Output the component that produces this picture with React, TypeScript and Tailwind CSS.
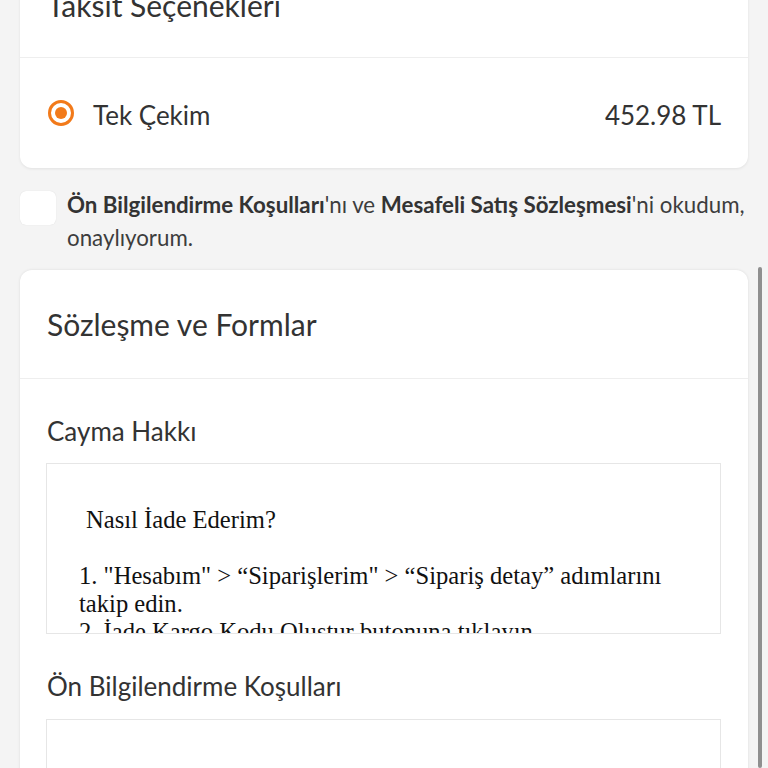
import React from "react";

export default function App() {
  return (
    <div className="relative h-[768px] overflow-hidden bg-[#f4f4f4] text-[#333333]" style={{ fontFamily: "Lato, 'Open Sans', sans-serif" }}>
      {/* Card 1 */}
      <div className="mx-[20px] -mt-[46px] rounded-b-[12px] bg-white shadow-[0_1px_3px_rgba(0,0,0,0.08)]">
        <div className="flex h-[104px] items-center border-b border-[#eeeeee] px-[27px]">
          <span className="text-[30px]">Taksit Seçenekleri</span>
        </div>
        <div className="flex h-[110px] items-center justify-between pl-[28px] pr-[27px] pt-[4px]">
          <div className="flex items-center gap-[19px]">
            <span className="-mt-[4px] flex h-[26px] w-[26px] items-center justify-center rounded-full border-[3px] border-[#f27a1a]">
              <span className="h-[12px] w-[12px] rounded-full bg-[#f27a1a]" />
            </span>
            <span className="text-[26px]">Tek Çekim</span>
          </div>
          <span className="text-[26px]">452.98 TL</span>
        </div>
      </div>

      {/* Checkbox row */}
      <div className="mt-[20px] flex items-start gap-[11px] pl-[20px] pr-[10px]">
        <span className="mt-[3px] h-[34px] w-[36px] shrink-0 rounded-[6px] bg-white shadow-[0_0_1px_rgba(0,0,0,0.15)]" />
        <p className="text-[22.3px] leading-[33px] text-[#3d3d3d]">
          <b className="font-bold text-[#333333]">Ön Bilgilendirme Koşulları</b>'nı ve <b className="font-bold text-[#333333]">Mesafeli Satış Sözleşmesi</b>'ni okudum, onaylıyorum.
        </p>
      </div>

      {/* Card 2 */}
      <div className="mx-[20px] mt-[16px] rounded-t-[12px] bg-white shadow-[0_0_3px_rgba(0,0,0,0.1)]">
        <div className="flex h-[109px] items-center border-b border-[#eeeeee] px-[27px]">
          <span className="text-[30px]">Sözleşme ve Formlar</span>
        </div>
        <div className="pl-[26px] pr-[27px]">
          <div className="pt-[36px] text-[26px] leading-[32px] pl-[1px]">Cayma Hakkı</div>
          <div className="mt-[16px] h-[171px] overflow-hidden border border-[#e6e6e6] pl-[32px] pr-[20px] pt-[42px] text-[24.6px] leading-[28px] text-[#111111]" style={{ fontFamily: "'Liberation Serif', serif" }}>
            <p className="pl-[7px]">Nasıl İade Ederim?</p>
            <p>&nbsp;</p>
            <p>1. "Hesabım" &gt; “Siparişlerim" &gt; “Sipariş detay” adımlarını takip edin.</p>
            <p>2. İade Kargo Kodu Oluştur butonuna tıklayın.</p>
            <p>3. Ürünü kargoya verin.</p>
          </div>
          <div className="mt-[36px] text-[26px] leading-[32px] pl-[1px]">Ön Bilgilendirme Koşulları</div>
          <div className="mt-[17px] h-[171px] border border-[#e6e6e6]" />
        </div>
      </div>

      {/* scroll indicator */}
      <div className="absolute bottom-0 right-[6px] top-[267px] w-[4px] rounded-full bg-[#8f8f8f]" />
    </div>
  );
}
